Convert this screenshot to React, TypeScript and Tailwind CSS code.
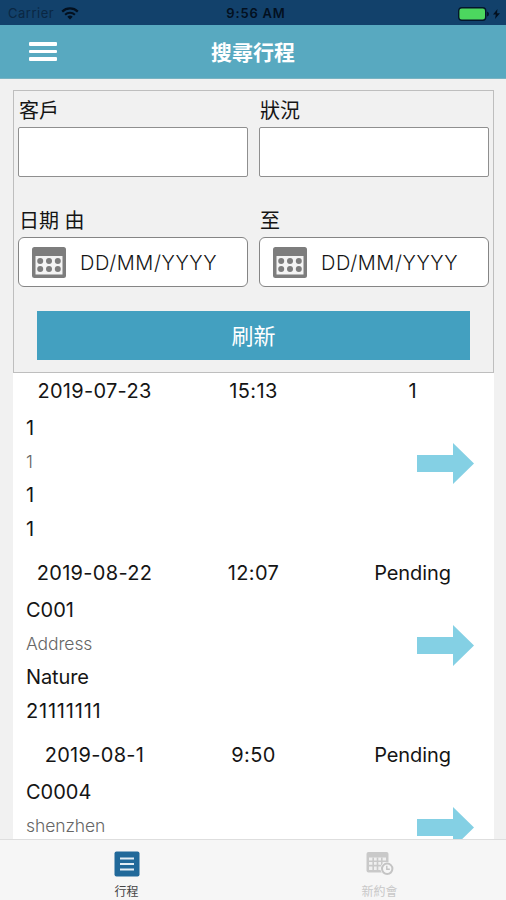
interface Trip {
  date: string;
  time: string;
  status: string;
  lines: string[];
}

const trips: Trip[] = [
  { date: "2019-07-23", time: "15:13", status: "1", lines: ["1", "1", "1", "1"] },
  {
    date: "2019-08-22",
    time: "12:07",
    status: "Pending",
    lines: ["C001", "Address", "Nature", "21111111"],
  },
  {
    date: "2019-08-1",
    time: "9:50",
    status: "Pending",
    lines: ["C0004", "shenzhen", "", ""],
  },
];

function WifiIcon() {
  return (
    <svg width="18" height="13" viewBox="0 0 18 13" fill="none" stroke="#03101f">
      <path d="M1.2 4.6a11.2 11.2 0 0 1 15.6 0" strokeWidth="2.2" />
      <path d="M4.1 7.7a7 7 0 0 1 9.8 0" strokeWidth="2" />
      <path d="M6.3 9.7a3.9 3.9 0 0 1 5.4 0L9 12.5z" fill="#03101f" stroke="none" />
    </svg>
  );
}

function CalendarIcon() {
  return (
    <svg width="34" height="31" viewBox="0 0 34 31" className="shrink-0">
      <rect width="34" height="31" rx="2.5" fill="#7d7d7d" />
      <rect x="3.5" y="9" width="27" height="18.5" fill="#f4f4f4" />
      <g fill="#7d7d7d">
        <circle cx="8.2" cy="14" r="3" />
        <circle cx="17" cy="14" r="3" />
        <circle cx="25.8" cy="14" r="3" />
        <circle cx="8.2" cy="22" r="3" />
        <circle cx="17" cy="22" r="3" />
        <circle cx="25.8" cy="22" r="3" />
      </g>
    </svg>
  );
}

function ArrowIcon() {
  return (
    <svg width="57" height="41" viewBox="0 0 57 41">
      <path d="M0 12h36V0l21 20.5L36 41V29H0z" fill="#84d0e4" />
    </svg>
  );
}

function NewAppointmentIcon() {
  return (
    <svg width="28" height="25" viewBox="0 0 28 25">
      <rect x="0.5" y="1" width="22" height="20.5" rx="2" fill="#c9c9c9" />
      <rect x="3" y="6.5" width="17" height="12.5" fill="#f0f0f0" />
      <path
        d="M3 10.3h17M3 14.6h17M7.2 6.5v12.5M11.5 6.5v12.5M15.8 6.5v12.5"
        stroke="#c9c9c9"
        strokeWidth="1.6"
      />
      <circle cx="21.2" cy="17.8" r="6.8" fill="#f6f6f6" />
      <circle cx="21.2" cy="17.8" r="5.2" fill="#f6f6f6" stroke="#c4c4c4" strokeWidth="2" />
      <path d="M20.8 14.8v3.4h3" fill="none" stroke="#c4c4c4" strokeWidth="1.4" />
    </svg>
  );
}

function TextField({ label }: { label: string }) {
  return (
    <label className="block">
      <span className="block h-9 pt-[5px] pl-px text-[20px] leading-[30px]">{label}</span>
      <input className="block h-[50px] w-full rounded-[2px] border-[1.5px] border-[#8f8f8f] bg-white px-3 outline-none" />
    </label>
  );
}

function DateField({ label }: { label: string }) {
  return (
    <div>
      <div className="h-9 pt-[5px] pl-px text-[20px] leading-[30px]">{label}</div>
      <div className="flex h-[50px] items-center gap-[14px] rounded-[6px] border-[1.5px] border-[#858585] bg-white pl-[13px]">
        <CalendarIcon />
        <span className="pt-px text-[20px] font-light tracking-[0.6px]">DD/MM/YYYY</span>
      </div>
    </div>
  );
}

function TripRow({ trip }: { trip: Trip }) {
  return (
    <div className="h-[182px] shrink-0">
      {/* date, time, status */}
      <div className="grid h-9 grid-cols-3 px-0.5 text-center text-[20px] leading-[37px]">
        <span className="tracking-[0.3px]">{trip.date}</span>
        <span className="tracking-[0.4px]">{trip.time}</span>
        <span className="tracking-[-0.1px]">{trip.status}</span>
      </div>

      <div className="flex justify-between pr-[20px] pl-3">
        <div>
          <div className="h-9 pl-px text-[20px] leading-[39px]">{trip.lines[0]}</div>
          <div className="h-8 pl-px text-[17.5px] leading-[33px] font-light tracking-[-0.1px] text-[#666]">
            {trip.lines[1]}
          </div>
          <div className="h-[34px] pl-px text-[20px] leading-9 tracking-[-0.1px]">{trip.lines[2]}</div>
          <div className="h-[34px] pl-px text-[20px] leading-[37px] tracking-[0.8px]">{trip.lines[3]}</div>
        </div>
        <div className="pt-[34px]">
          <ArrowIcon />
        </div>
      </div>
    </div>
  );
}

export default function App() {
  return (
    <div className="flex h-[900px] w-[506px] flex-col overflow-hidden bg-[#f1f1f1] font-['Inter','Noto_Sans_CJK_TC',sans-serif] text-[#151515]">
      {/* status bar */}
      <div className="grid h-[25px] shrink-0 grid-cols-3 items-center bg-[#12416b] pt-0.5 text-[13px] text-[#03101f]">
        <div className="flex items-center gap-[7px] pl-2">
          <span className="tracking-[0.5px] text-[#0a2743]">Carrier</span>
          <WifiIcon />
        </div>
        <span className="pl-1.5 text-center font-semibold tracking-[0.8px]">9:56 AM</span>
        <div className="flex items-center justify-end gap-1 pr-1.5">
          <svg width="31" height="14" viewBox="0 0 31 14">
            <rect x="0.7" y="0.7" width="27" height="12.6" rx="3" fill="#4cd75f" stroke="#04152b" strokeWidth="1.4" />
            <path d="M29 4.5q2 .5 2 2.5t-2 2.5z" fill="#04152b" />
          </svg>
          <svg width="7" height="10" viewBox="0 0 7 10">
            <path d="M4.5 0 0 5.6h2.8L2 10l5-5.8H4z" fill="#03101f" />
          </svg>
        </div>
      </div>

      {/* header */}
      <div className="grid h-[54px] shrink-0 grid-cols-3 items-center border-b border-[#79b3c2] bg-[#58a9c0]">
        <button className="ml-[29px] flex w-7 flex-col gap-1">
          <span className="h-[3.5px] rounded-[1px] bg-white" />
          <span className="h-[3.5px] rounded-[1px] bg-white" />
          <span className="h-[3.5px] rounded-[1px] bg-white" />
        </button>
        <h1 className="pt-0.5 text-center text-[21px] font-bold text-white">搜尋行程</h1>
      </div>

      {/* search form */}
      <div className="mx-[13px] mt-[11px] h-[283px] w-[481px] shrink-0 border-[1.5px] border-[#bebebe] px-1">
        <div className="grid grid-cols-2 gap-x-[11px] gap-y-6">
          <TextField label="客戶" />
          <TextField label="狀況" />
          <DateField label="日期 由" />
          <DateField label="至" />
        </div>
        <button className="mt-6 ml-[19px] h-[49px] w-[433px] bg-[#43a0c0] text-[22px] leading-[50px] text-white">
          刷新
        </button>
      </div>

      {/* trips */}
      <div className="mx-[13px] flex min-h-0 w-[481px] flex-1 flex-col overflow-hidden bg-white">
        {trips.map((trip) => (
          <TripRow key={trip.date} trip={trip} />
        ))}
      </div>

      {/* tab bar */}
      <div className="grid h-[61px] shrink-0 grid-cols-2 border-t border-[#dedede] bg-[#f6f6f6] text-[12px] leading-[18px]">
        <div className="flex flex-col items-center pt-[11px] text-[#444]">
          <svg width="26" height="26" viewBox="0 0 26 26">
            <rect x="0.5" y="0.5" width="25" height="25" rx="2" fill="#21699a" />
            <path d="M6 7.5h14M6 13h14M6 18.5h14" stroke="#e3eef5" strokeWidth="2.2" />
          </svg>
          <span className="mt-1.5">行程</span>
        </div>
        <div className="flex flex-col items-center pt-[11px] text-[#c8c8c8]">
          <NewAppointmentIcon />
          <span className="mt-[7px]">新約會</span>
        </div>
      </div>
    </div>
  );
}
